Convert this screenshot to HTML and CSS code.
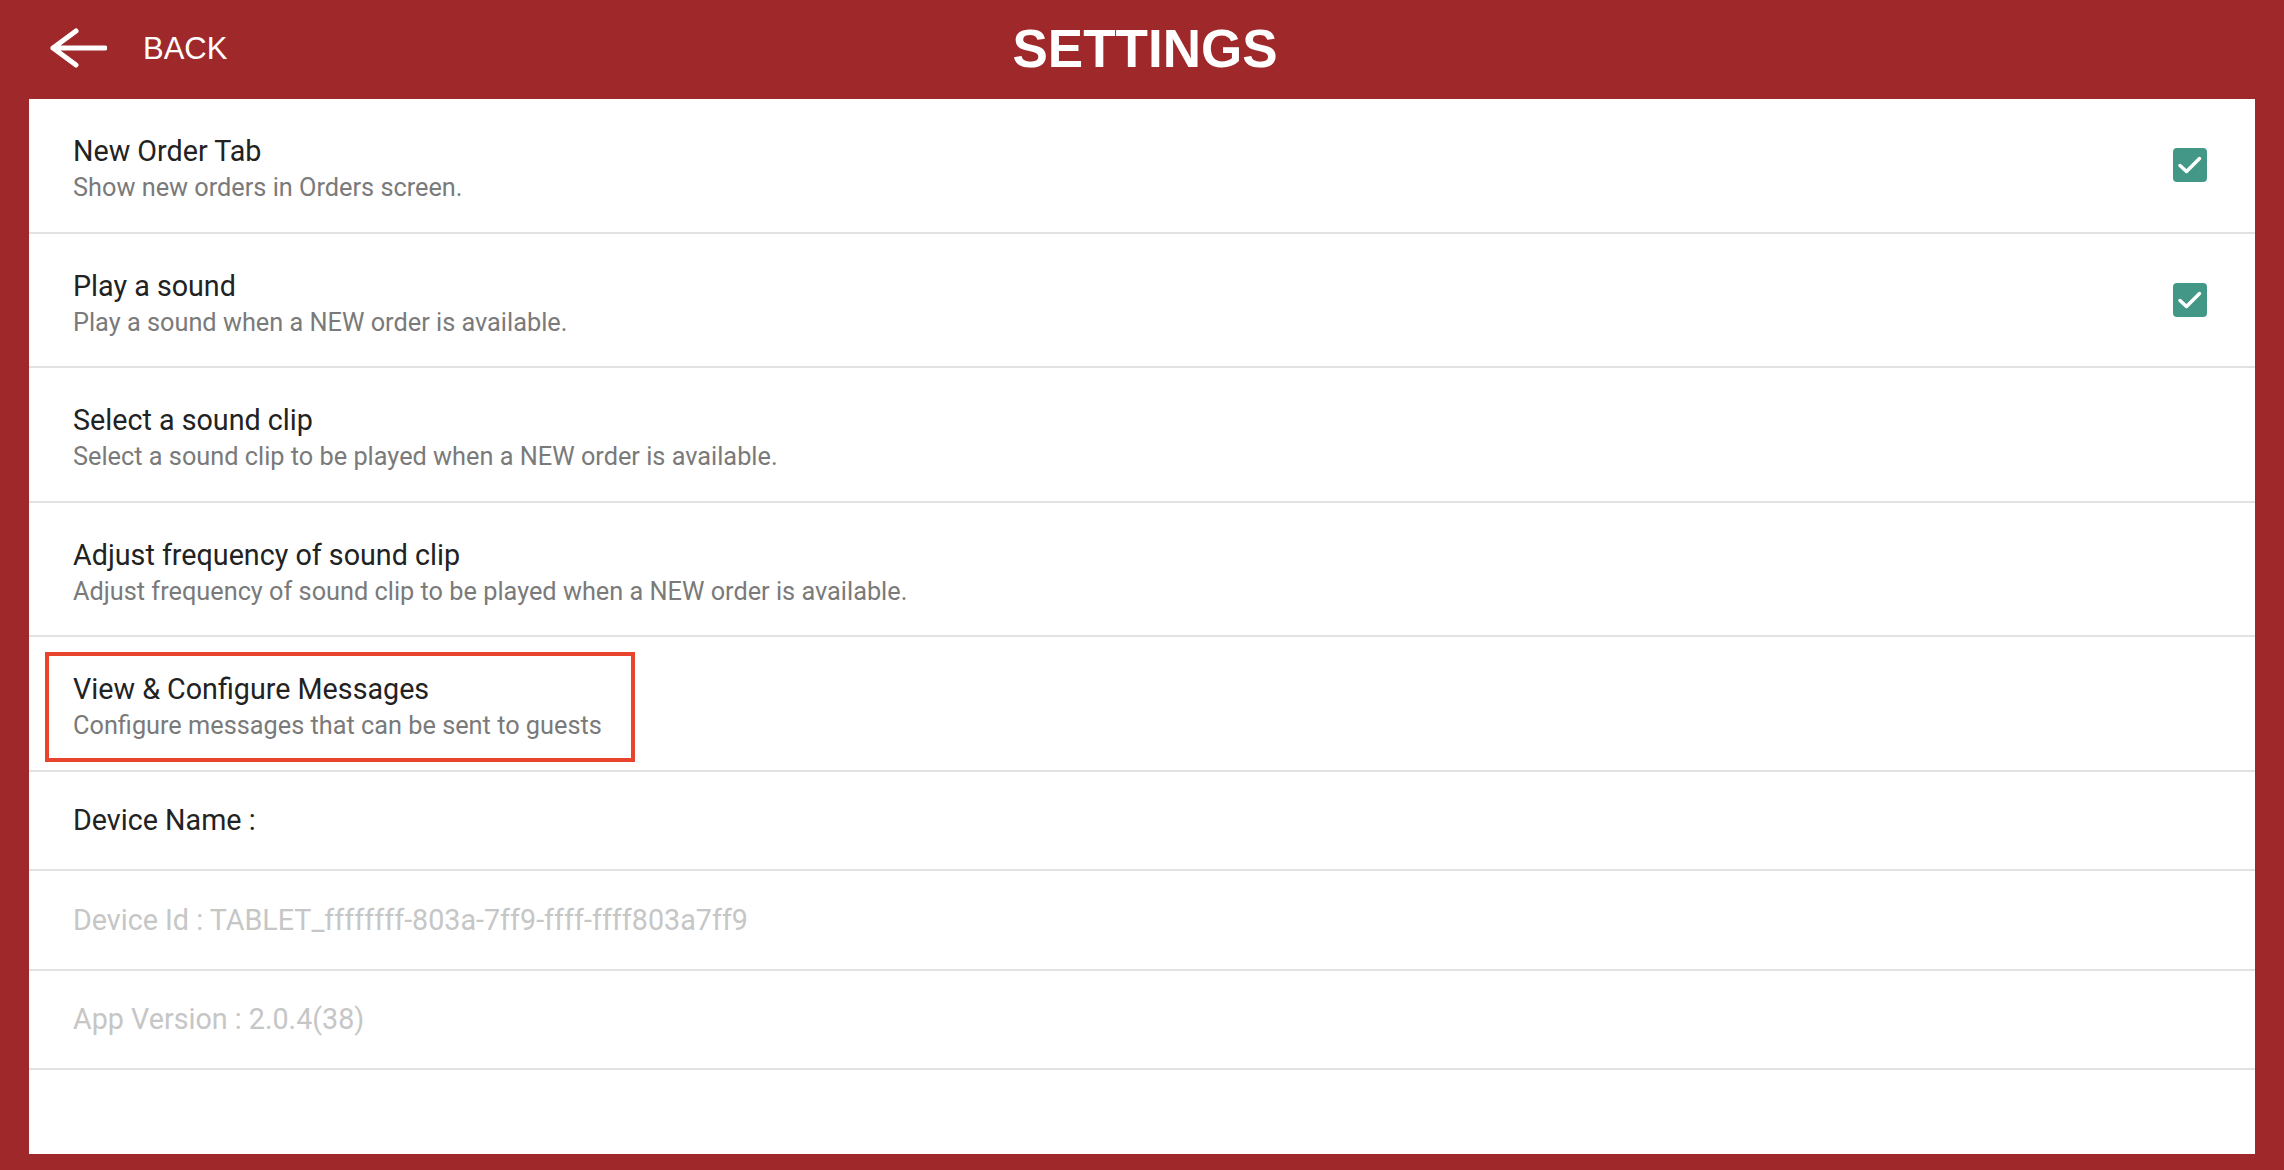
FILE: index.html
```html
<!DOCTYPE html>
<html lang="en">
<head>
<meta charset="utf-8">
<title>Settings</title>
<link rel="stylesheet" href="styles.css">
</head>
<body>
<header class="topbar">
  <div class="back">
    <svg class="back-arrow" width="58" height="40" viewBox="0 0 58 40" aria-hidden="true">
      <path d="M4 20 H56 M4 20 L27 3 M4 20 L27 37" fill="none" stroke="#fff" stroke-width="5" stroke-linecap="round" stroke-linejoin="round"/>
    </svg>
    <span class="back-label">BACK</span>
  </div>
  <h1 class="title">SETTINGS</h1>
  <div class="spacer"></div>
</header>
<main class="panel">
  <div class="row row-two">
    <div class="text">
      <div class="row-title">New Order Tab</div>
      <div class="row-sub">Show new orders in Orders screen.</div>
    </div>
    <span class="check"><svg width="34" height="34" viewBox="0 0 34 34" aria-hidden="true"><path d="M7 17.5 L13.5 23.5 L26.5 10.5" fill="none" stroke="#fff" stroke-width="3.5" stroke-linecap="round" stroke-linejoin="round"/></svg></span>
  </div>
  <div class="row row-two">
    <div class="text">
      <div class="row-title">Play a sound</div>
      <div class="row-sub">Play a sound when a NEW order is available.</div>
    </div>
    <span class="check"><svg width="34" height="34" viewBox="0 0 34 34" aria-hidden="true"><path d="M7 17.5 L13.5 23.5 L26.5 10.5" fill="none" stroke="#fff" stroke-width="3.5" stroke-linecap="round" stroke-linejoin="round"/></svg></span>
  </div>
  <div class="row row-two">
    <div class="text">
      <div class="row-title">Select a sound clip</div>
      <div class="row-sub">Select a sound clip to be played when a NEW order is available.</div>
    </div>
  </div>
  <div class="row row-two">
    <div class="text">
      <div class="row-title">Adjust frequency of sound clip</div>
      <div class="row-sub">Adjust frequency of sound clip to be played when a NEW order is available.</div>
    </div>
  </div>
  <div class="row row-two row-marked">
    <span class="highlight"></span>
    <div class="text">
      <div class="row-title">View &amp; Configure Messages</div>
      <div class="row-sub">Configure messages that can be sent to guests</div>
    </div>
  </div>
  <div class="row row-one">
    <div class="row-title">Device Name :</div>
  </div>
  <div class="row row-one">
    <div class="row-title muted">Device Id : TABLET_ffffffff-803a-7ff9-ffff-ffff803a7ff9</div>
  </div>
  <div class="row row-one">
    <div class="row-title muted">App Version : 2.0.4(38)</div>
  </div>
</main>
</body>
</html>
```

FILE: styles.css
```css
* { box-sizing: border-box; }

html, body {
  margin: 0;
  padding: 0;
}

body {
  background: #9e282a;
  font-family: "Roboto", "Noto Sans", sans-serif;
  height: 1170px;
  overflow: hidden;
}

.topbar {
  height: 99px;
  display: grid;
  grid-template-columns: 1fr auto 1fr;
  align-items: center;
  padding: 0 49px 3px 49px;
  color: #fff;
}

.back {
  display: flex;
  align-items: center;
  gap: 36px;
}

.back-arrow {
  display: block;
}

.back-label {
  font-family: "Liberation Sans", Arial, sans-serif;
  font-size: 31px;
  font-weight: 400;
  position: relative;
  top: 1px;
}

.title {
  margin: 0;
  font-family: "Liberation Sans", Arial, sans-serif;
  font-weight: 700;
  font-size: 53px;
  line-height: 1;
  position: relative;
  left: 3px;
}

.panel {
  margin: 0 29px;
  height: 1055px;
  background: #fff;
  display: flex;
  flex-direction: column;
}

.row {
  display: flex;
  align-items: center;
  justify-content: space-between;
  padding: 0 48px 0 44px;
  border-bottom: 2px solid #e2e2e2;
  flex: none;
}

.row-two {
  height: 134.5px;
  align-items: flex-start;
  padding-top: 35px;
  position: relative;
}

.row-one {
  height: 99.5px;
}

.row-title {
  font-size: 28.7px;
  line-height: 34px;
  color: #222222;
}

.row-sub {
  font-size: 25.3px;
  line-height: 30px;
  margin-top: 5px;
  color: #7a7a7a;
}

.muted {
  color: #c6c6c6;
}

.check {
  width: 34px;
  height: 34px;
  border-radius: 4px;
  background: #439786;
  display: block;
  align-self: center;
  margin-top: -35px;
}

.check svg {
  display: block;
}

.highlight {
  position: absolute;
  left: 16px;
  top: 15px;
  width: 590px;
  height: 110px;
  border: 4px solid #e8432d;
  pointer-events: none;
}
```
